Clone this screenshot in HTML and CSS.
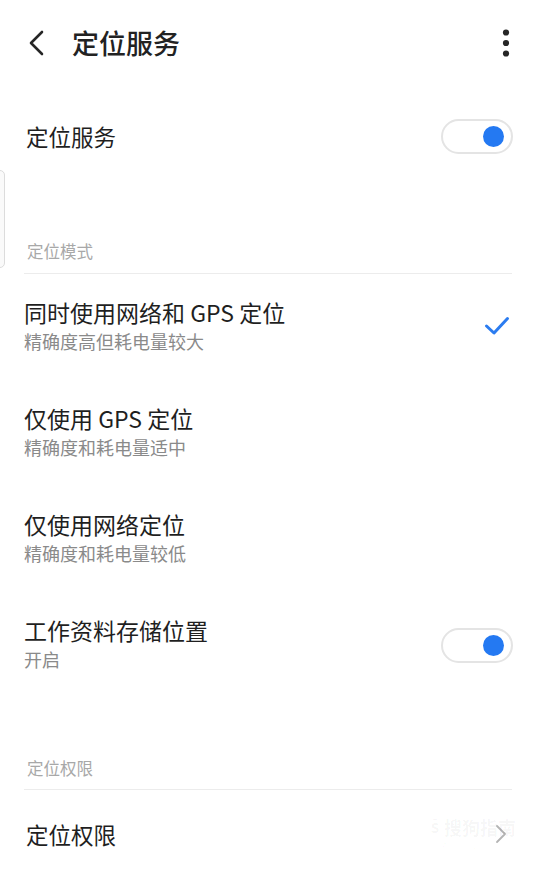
FILE: index.html
```html
<!DOCTYPE html>
<html lang="zh-CN">
<head>
<meta charset="utf-8">
<title>定位服务</title>
<link rel="stylesheet" href="styles.css">
</head>
<body>
<div class="screen">
  <header class="topbar">
    <svg class="back" width="18" height="26" viewBox="0 0 18 26"><path d="M15 2 L4 13 L15 24" fill="none" stroke="#262626" stroke-width="2.6" stroke-linecap="round" stroke-linejoin="round"/></svg>
    <h1 class="title">定位服务</h1>
    <span class="spacer"></span>
    <svg class="more" width="8" height="28" viewBox="0 0 8 28"><circle cx="4" cy="3.5" r="3.1" fill="#262626"/><circle cx="4" cy="14" r="3.1" fill="#262626"/><circle cx="4" cy="24.5" r="3.1" fill="#262626"/></svg>
  </header>

  <div class="row row-main">
    <span class="label">定位服务</span>
    <span class="toggle"><span class="knob"></span></span>
  </div>

  <div class="section-head section-head-1">定位模式</div>

  <div class="item">
    <div class="texts">
      <div class="item-title">同时使用网络和 GPS 定位</div>
      <div class="item-sub">精确度高但耗电量较大</div>
    </div>
    <svg class="check" width="26" height="20" viewBox="0 0 26 20"><path d="M2.5 10 L10 17 L23.5 2.5" fill="none" stroke="#2b7cf0" stroke-width="3" stroke-linecap="round" stroke-linejoin="round"/></svg>
  </div>

  <div class="item">
    <div class="texts">
      <div class="item-title">仅使用 GPS 定位</div>
      <div class="item-sub">精确度和耗电量适中</div>
    </div>
  </div>

  <div class="item">
    <div class="texts">
      <div class="item-title">仅使用网络定位</div>
      <div class="item-sub">精确度和耗电量较低</div>
    </div>
  </div>

  <div class="item">
    <div class="texts">
      <div class="item-title">工作资料存储位置</div>
      <div class="item-sub">开启</div>
    </div>
    <span class="toggle"><span class="knob"></span></span>
  </div>

  <div class="section-head section-head-2">定位权限</div>

  <div class="row row-last">
    <span class="label">定位权限</span>
    <svg class="chev" width="14" height="20" viewBox="0 0 14 20"><path d="M3 2 L11 10 L3 18" fill="none" stroke="#b4b4b4" stroke-width="1.8" stroke-linecap="round" stroke-linejoin="round"/></svg>
    <div class="watermark"><span class="wm-top">Ⓢ搜狗指南</span><span class="wm-bot">zhinan.sogou.com</span></div>
  </div>

  <div class="edge-handle"></div>
</div>
</body>
</html>
```

FILE: styles.css
```css
* { box-sizing: border-box; }
html, body { margin: 0; padding: 0; background: #ffffff; }
body {
  font-family: "Noto Sans CJK SC", "Noto Sans", sans-serif;
  color: #1f1f1f;
}
.screen {
  position: relative;
  width: 540px;
  height: 876px;
  overflow: hidden;
}
.topbar {
  height: 86px;
  display: flex;
  align-items: center;
  padding: 0 30px 0 27px;
}
.back { display: block; margin-top: -1px; }
.title {
  margin: 0 0 0 27px;
  font-size: 27px;
  font-weight: 500;
  line-height: 34px;
  color: #222;
}
.spacer { flex: 1; }
.more { display: block; margin-top: 0; }

.row {
  display: flex;
  align-items: center;
  padding: 0 27px 0 26px;
}
.row-main { height: 100px; }
.row-last { height: 88px; position: relative; }
.label {
  flex: 1;
  font-size: 22.5px;
  line-height: 30px;
  color: #1f1f1f;
}

.toggle {
  position: relative;
  flex: none;
  width: 72px;
  height: 35px;
  border: 2px solid #e4e4e4;
  border-radius: 18px;
  background: #fff;
  display: flex;
  align-items: center;
  justify-content: flex-end;
  padding-right: 7px;
}
.knob {
  width: 21px;
  height: 21px;
  border-radius: 50%;
  background: #2479f2;
}

.section-head {
  margin: 0 28px 0 24px;
  padding-left: 3px;
  font-size: 16.5px;
  line-height: 22px;
  color: #a8a8a8;
  border-bottom: 1px solid #ececec;
}
.section-head-1 { padding-top: 54px; padding-bottom: 11px; }
.section-head-2 { padding-top: 59px; padding-bottom: 10px; }

.item {
  height: 106px;
  display: flex;
  align-items: center;
  padding: 0 27px 0 24px;
}
.texts {
  flex: 1;
  padding-bottom: 4px;
}
.item-title {
  font-size: 23px;
  line-height: 32px;
  color: #1f1f1f;
}
.item-sub {
  font-size: 18px;
  line-height: 26px;
  color: #8a8a8a;
}
.check { display: block; margin-right: 3px; margin-top: -2px; }
.chev { display: block; margin-right: 5px; }

.watermark {
  position: absolute;
  right: 24px;
  top: 26px;
  display: flex;
  flex-direction: column;
  align-items: center;
  gap: 2px;
  color: rgba(0, 0, 0, 0.04);
  pointer-events: none;
}
.wm-top { display: block; font-size: 18px; line-height: 22px; font-weight: 700; }
.wm-bot { display: block; font-size: 7px; line-height: 9px; font-family: "Liberation Sans", sans-serif; }

.edge-handle {
  position: absolute;
  left: -6px;
  top: 170px;
  width: 11px;
  height: 98px;
  border: 1px solid #dcdcdc;
  border-radius: 5px;
  background: #fafafa;
}
```
